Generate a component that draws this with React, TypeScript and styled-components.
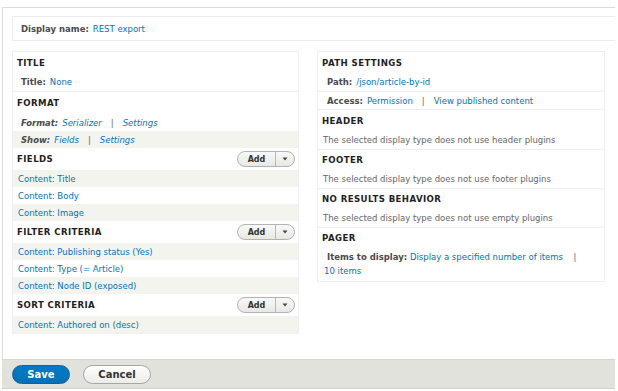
import React from "react";
import styled, { createGlobalStyle } from "styled-components";

const Global = createGlobalStyle`
  html, body { margin: 0; padding: 0; background: #fff; }
  body { font-family: "DejaVu Sans", Verdana, sans-serif; font-size: 8.5px; color: #333; }
  a { color: #0074bd; text-decoration: none; }
`;

const Page = styled.div`
  padding: 7px 0 0 2px;
  width: 613px;
`;

const Panel = styled.div`
  border-top: 1px solid #dcdcdc;
  border-left: 1px solid #dcdcdc;
  padding: 8px 0 25px 9px;
`;

const DisplayBar = styled.div`
  border: 1px solid #ededed;
  border-right: none;
  display: flex;
  align-items: center;
  padding: 1px 0 0 8px;
  box-sizing: border-box;
  height: 25px;
  gap: 4px;
`;

const Label = styled.span<{ $italic?: boolean }>`
  font-weight: bold;
  color: #4a4a4a;
  font-style: ${(p) => (p.$italic ? "italic" : "normal")};
`;

const Link = styled.a<{ $italic?: boolean }>`
  font-style: ${(p) => (p.$italic ? "italic" : "normal")};
`;

const Columns = styled.div`
  margin-top: 10px;
  display: grid;
  grid-template-columns: 287px 288px;
  column-gap: 18px;
  align-items: start;
`;

const Column = styled.div`
  border: 1px solid #efefef;
`;

const Section = styled.div<{ $divider?: boolean }>`
  border-bottom: ${(p) => (p.$divider ? "1px solid #efefef" : "none")};
  &:last-child { border-bottom: none; }
`;

const Heading = styled.div<{ $h: number }>`
  height: ${(p) => p.$h}px;
  padding: 0 3px 0 4px;
  display: flex;
  align-items: center;
  justify-content: space-between;
  font-weight: bold;
  text-transform: uppercase;
  letter-spacing: 0.4px;
  color: #1f1f1f;
  font-size: 8.6px;
`;

const Row = styled.div<{ $shade?: boolean; $indent?: number; $h?: number; $line?: boolean }>`
  min-height: ${(p) => p.$h ?? 17}px;
  display: flex;
  align-items: center;
  flex-wrap: wrap;
  padding-left: ${(p) => p.$indent ?? 5}px;
  background: ${(p) => (p.$shade ? "#f3f4ee" : "#fff")};
  border-bottom: ${(p) => (p.$line ? "1px solid #efefef" : "none")};
  gap: 4px;
`;

const Pipe = styled.span`
  color: #666;
  margin: 0 5px;
`;

const Desc = styled.span`
  color: #666;
`;

const PagerText = styled.div`
  padding: 2px 12px 3px 9px;
  line-height: 14px;
`;

const PagerTail = styled.div`
  margin-left: -3px;
`;

const AddGroup = styled.div`
  display: flex;
  height: 14px;
  width: 56px;
  border: 1px solid #b3b3b3;
  border-radius: 10px;
  background: linear-gradient(#f8f8f6, #e8e8e3);
  overflow: hidden;
  letter-spacing: 0;
  text-transform: none;
`;

const AddMain = styled.span`
  flex: 1;
  display: flex;
  align-items: center;
  justify-content: center;
  font-weight: bold;
  color: #333;
  font-size: 8px;
  border-right: 1px solid #b8b8b8;
`;

const AddCaret = styled.span`
  width: 18px;
  display: flex;
  align-items: center;
  justify-content: center;
`;

const Footer = styled.div`
  height: 28px;
  background: #e1e2dc;
  border-top: 1px solid #d6d6d0;
  border-bottom: 1px solid #d3d3cd;
  display: flex;
  align-items: center;
  padding-left: 10px;
  gap: 13px;
`;

const Button = styled.button<{ $primary?: boolean; $w: number }>`
  width: ${(p) => p.$w}px;
  height: 19px;
  border-radius: 10px;
  font-family: "DejaVu Sans", Verdana, sans-serif;
  font-weight: bold;
  font-size: 10px;
  padding: 0;
  cursor: pointer;
  border: 1px solid ${(p) => (p.$primary ? "#1e5c90" : "#a6a6a6")};
  color: ${(p) => (p.$primary ? "#fff" : "#333")};
  background: ${(p) =>
    p.$primary ? "linear-gradient(#007bc6, #0071b8)" : "linear-gradient(#fefefd, #ecebe6)"};
`;

const Caret = () => (
  <svg width="6" height="4" viewBox="0 0 6 4">
    <path d="M0.5 0.5 L5.5 0.5 L3 3.5 Z" fill="#444" />
  </svg>
);

const Add = () => (
  <AddGroup>
    <AddMain>Add</AddMain>
    <AddCaret>
      <Caret />
    </AddCaret>
  </AddGroup>
);

const linkRows = (items: string[]) =>
  items.map((t, i) => (
    <Row key={t} $shade={i % 2 === 0}>
      <Link href="#">{t}</Link>
    </Row>
  ));

export default function App() {
  return (
    <>
      <Global />
      <Page>
        <Panel>
          <DisplayBar>
            <Label>Display name:</Label>
            <Link href="#">REST export</Link>
          </DisplayBar>
          <Columns>
            <Column>
              <Section $divider>
                <Heading $h={21}>Title</Heading>
                <Row $indent={8} $h={18}>
                  <Label>Title:</Label>
                  <Link href="#">None</Link>
                </Row>
              </Section>
              <Section>
                <Heading $h={22}>Format</Heading>
                <Row $indent={8}>
                  <Label $italic>Format:</Label>
                  <Link href="#" $italic>Serializer</Link>
                  <Pipe>|</Pipe>
                  <Link href="#" $italic>Settings</Link>
                </Row>
                <Row $indent={8} $shade>
                  <Label $italic>Show:</Label>
                  <Link href="#" $italic>Fields</Link>
                  <Pipe>|</Pipe>
                  <Link href="#" $italic>Settings</Link>
                </Row>
              </Section>
              <Section>
                <Heading $h={22}>
                  Fields
                  <Add />
                </Heading>
                {linkRows(["Content: Title", "Content: Body", "Content: Image"])}
              </Section>
              <Section>
                <Heading $h={22}>
                  Filter criteria
                  <Add />
                </Heading>
                {linkRows([
                  "Content: Publishing status (Yes)",
                  "Content: Type (= Article)",
                  "Content: Node ID (exposed)",
                ])}
              </Section>
              <Section>
                <Heading $h={22}>
                  Sort criteria
                  <Add />
                </Heading>
                {linkRows(["Content: Authored on (desc)"])}
              </Section>
            </Column>

            <Column>
              <Section $divider>
                <Heading $h={21}>Path settings</Heading>
                <Row $indent={9} $h={18} $line>
                  <Label>Path:</Label>
                  <Link href="#">/json/article-by-id</Link>
                </Row>
                <Row $indent={9} $h={17}>
                  <Label>Access:</Label>
                  <Link href="#">Permission</Link>
                  <Pipe>|</Pipe>
                  <Link href="#">View published content</Link>
                </Row>
              </Section>
              <Section $divider>
                <Heading $h={21}>Header</Heading>
                <Row $h={18}>
                  <Desc>The selected display type does not use header plugins</Desc>
                </Row>
              </Section>
              <Section $divider>
                <Heading $h={20}>Footer</Heading>
                <Row $h={18}>
                  <Desc>The selected display type does not use footer plugins</Desc>
                </Row>
              </Section>
              <Section $divider>
                <Heading $h={20}>No results behavior</Heading>
                <Row $h={18}>
                  <Desc>The selected display type does not use empty plugins</Desc>
                </Row>
              </Section>
              <Section>
                <Heading $h={20}>Pager</Heading>
                <PagerText>
                  <Label>Items to display:</Label>{" "}
                  <Link href="#">Display a specified number of items</Link>
                  <Pipe>&nbsp;&nbsp;|</Pipe>
                  <PagerTail>
                    <Link href="#">10 items</Link>
                  </PagerTail>
                </PagerText>
              </Section>
            </Column>
          </Columns>
        </Panel>
        <Footer>
          <Button $primary $w={58}>Save</Button>
          <Button $w={68}>Cancel</Button>
        </Footer>
      </Page>
    </>
  );
}
